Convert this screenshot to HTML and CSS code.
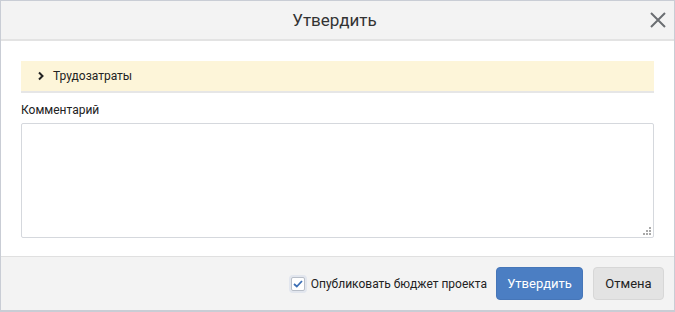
FILE: index.html
```html
<!DOCTYPE html>
<html lang="ru">
<head>
    <meta charset="UTF-8">
    <meta name="viewport" content="width=device-width, initial-scale=1.0">
    <title>Утвердить</title>
    <link rel="stylesheet" href="styles.css">
</head>
<body>
    <div class="dialog">
        <div class="dialog-header">
            <span></span>
            <h2 class="dialog-title">Утвердить</h2>
            <button type="button" class="close-btn" title="Закрыть">
                <svg width="16" height="16" viewBox="0 0 16 16">
                    <path d="M1 1 L15 15 M15 1 L1 15" stroke="#6b6e72" stroke-width="2" fill="none"/>
                </svg>
            </button>
        </div>

        <div class="dialog-body">
            <div class="section">
                <svg class="chevron" width="8" height="10" viewBox="0 0 8 10">
                    <path d="M2 1.5 L5.5 5 L2 8.5" stroke="#222" stroke-width="2" fill="none"/>
                </svg>
                <span>Трудозатраты</span>
            </div>

            <div class="form-group">
                <label for="comment">Комментарий</label>
                <div class="textarea-wrap">
                    <textarea id="comment" name="comment"></textarea>
                    <svg class="grip" width="8" height="8" viewBox="0 0 8 8">
                        <rect x="6" y="0" width="2" height="2" fill="#a8a8a8"/>
                        <rect x="3" y="3" width="2" height="2" fill="#a8a8a8"/>
                        <rect x="6" y="3" width="2" height="2" fill="#a8a8a8"/>
                        <rect x="0" y="6" width="2" height="2" fill="#a8a8a8"/>
                        <rect x="3" y="6" width="2" height="2" fill="#a8a8a8"/>
                        <rect x="6" y="6" width="2" height="2" fill="#a8a8a8"/>
                    </svg>
                </div>
            </div>
        </div>

        <div class="dialog-footer">
            <label class="check">
                <span class="check-box">
                    <svg width="10" height="8" viewBox="0 0 10 8">
                        <path d="M1 4 L3.8 6.5 L9 1" stroke="#3d6fb5" stroke-width="1.8" fill="none"/>
                    </svg>
                </span>
                Опубликовать бюджет проекта
            </label>
            <button type="button" class="ok-btn">Утвердить</button>
            <button type="button" class="cancel-btn">Отмена</button>
        </div>
    </div>
</body>
</html>
```

FILE: styles.css
```css
body {
    margin: 0;
    padding: 0;
    font-family: Roboto, "Liberation Sans", Arial, sans-serif;
    background-color: #fff;
}

.dialog {
    width: 675px;
    height: 312px;
    box-sizing: border-box;
    border: 1px solid #c9cdd5;
    border-bottom-width: 2px;
    display: flex;
    flex-direction: column;
    background: white;
}

.dialog-header {
    height: 40px;
    box-sizing: border-box;
    background: #f3f3f3;
    border-bottom: 2px solid #e3e3e3;
    display: grid;
    grid-template-columns: 1fr auto 1fr;
    align-items: center;
}

.dialog-title {
    margin: 0 0 0 -6px;
    font-size: 17px;
    font-weight: normal;
    color: #333;
}

.close-btn {
    justify-self: end;
    margin-right: 8px;
    padding: 0;
    border: none;
    background: none;
    width: 16px;
    height: 16px;
    cursor: pointer;
}

.dialog-body {
    flex: 1;
    padding: 20px 20px 0 20px;
}

.section {
    height: 30px;
    background: #fdf5d9;
    border-bottom: 2px solid #e6e6e6;
    display: flex;
    align-items: center;
    font-size: 12px;
    color: #222;
}

.chevron {
    margin-left: 16px;
    margin-right: 8px;
}

.form-group {
    display: flex;
    flex-direction: column;
    margin-top: 10px;
}

.form-group label {
    font-size: 12px;
    color: #222;
    margin-bottom: 6px;
}

.textarea-wrap {
    position: relative;
    display: flex;
}

.textarea-wrap textarea {
    flex: 1;
    height: 115px;
    box-sizing: border-box;
    border: 1px solid #d5d8dd;
    border-radius: 2px;
    font-family: inherit;
    font-size: 12px;
    resize: none;
}

.grip {
    position: absolute;
    right: 3px;
    bottom: 3px;
}

.dialog-footer {
    height: 54px;
    box-sizing: border-box;
    background: #f3f3f3;
    border-top: 1px solid #e0e0e0;
    display: flex;
    align-items: center;
    justify-content: flex-end;
    gap: 10px;
    padding-right: 10px;
}

.check {
    display: flex;
    align-items: center;
    gap: 6px;
    font-size: 12px;
    color: #222;
    margin-right: -1px;
}

.check-box {
    width: 12px;
    height: 12px;
    border: 1px solid #b8bec8;
    border-radius: 2px;
    background: white;
    box-shadow: 0 0 0 2px #e2e6ee;
    display: flex;
    align-items: center;
    justify-content: center;
}

.ok-btn,
.cancel-btn {
    height: 33px;
    border-radius: 4px;
    font-family: inherit;
    font-size: 13px;
    cursor: pointer;
}

.ok-btn {
    width: 87px;
    background: #4b7ec3;
    border: 1px solid #4676b8;
    color: white;
}

.cancel-btn {
    width: 71px;
    background: #e3e3e3;
    border: 1px solid #d7d7d7;
    color: #222;
}
```
